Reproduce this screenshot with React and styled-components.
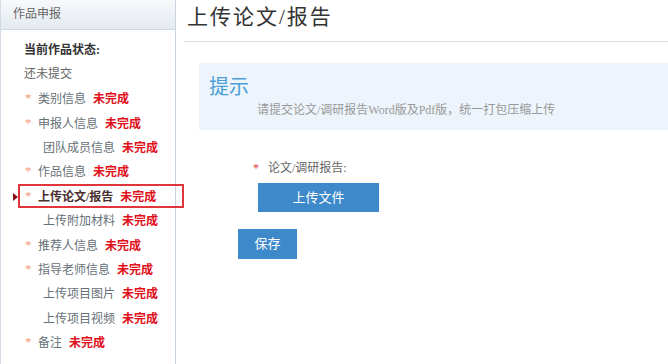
import React from 'react'
import styled, { createGlobalStyle } from 'styled-components'

const GlobalStyle = createGlobalStyle`
  html, body { margin: 0; padding: 0; background: #fff; }
  body {
    font-family: "Liberation Serif", "Noto Sans CJK SC", serif;
    width: 668px;
    height: 364px;
    overflow: hidden;
  }
`

const items = [
  { label: '类别信息', star: true },
  { label: '申报人信息', star: true },
  { label: '团队成员信息', sub: true },
  { label: '作品信息', star: true },
  { label: '上传论文/报告', star: true, active: true },
  { label: '上传附加材料', sub: true },
  { label: '推荐人信息', star: true },
  { label: '指导老师信息', star: true },
  { label: '上传项目图片', sub: true },
  { label: '上传项目视频', sub: true },
  { label: '备注', star: true },
]

function App() {
  return (
    <>
      <GlobalStyle />
      <Page>
        <Sidebar>
          <SideHead>作品申报</SideHead>
          <SideBody>
            <StatusTitle>当前作品状态:</StatusTitle>
            <StatusText>还未提交</StatusText>
            {items.map(it => (
              <Item key={it.label} $active={it.active} $sub={it.sub}>
                {it.active && <Arrow />}
                {it.star && <Star>*</Star>}
                <Label $active={it.active}>{it.label}</Label>
                <Todo>未完成</Todo>
              </Item>
            ))}
          </SideBody>
        </Sidebar>
        <Main>
          <Title>上传论文/报告</Title>
          <Tip>
            <TipTitle>提示</TipTitle>
            <TipText>请提交论文/调研报告Word版及Pdf版，统一打包压缩上传</TipText>
          </Tip>
          <Field>
            <FieldLabel><ReqStar>*</ReqStar>论文/调研报告:</FieldLabel>
            <Button $w={121} $h={29}>上传文件</Button>
          </Field>
          <SaveRow>
            <Button $w={59} $h={30}>保存</Button>
          </SaveRow>
        </Main>
      </Page>
    </>
  )
}

export default App

const Page = styled.div`
display: flex;
width: 668px;
height: 364px;
`
const Sidebar = styled.div`
width: 174px;
flex-shrink: 0;
border-left: 1px solid #d3dce7;
border-right: 1px solid #c9d4e1;
display: flex;
flex-direction: column;
`
const SideHead = styled.div`
height: 29px;
line-height: 29px;
padding-left: 12px;
font-size: 12px;
color: #666;
background: linear-gradient(#f7f9fb, #e4eaf1);
border-bottom: 1px solid #cfd8e3;
`
const SideBody = styled.div`
padding: 9px 0 0 17px;
display: flex;
flex-direction: column;
`
const StatusTitle = styled.div`
padding-left: 6px;
height: 23px;
line-height: 23px;
font-size: 12px;
font-weight: bold;
color: #333;
`
const StatusText = styled.div`
padding-left: 6px;
height: 24px;
line-height: 24px;
font-size: 12px;
color: #666;
`
const Item = styled.div`
position: relative;
box-sizing: border-box;
width: 166px;
height: 24.4px;
display: flex;
align-items: center;
font-size: 12px;
padding-left: ${p => (p.$sub ? '23px' : '5px')};
border: 2px solid ${p => (p.$active ? '#e0353b' : 'transparent')};
`
const Arrow = styled.span`
position: absolute;
left: -7px;
top: 7px;
width: 0;
height: 0;
border-top: 4px solid transparent;
border-bottom: 4px solid transparent;
border-left: 5px solid #8b0d14;
`
const Star = styled.span`
color: #ef9d78;
width: 13px;
font-size: 13px;
`
const Label = styled.span`
color: ${p => (p.$active ? '#4a2f2f' : '#667077')};
font-weight: ${p => (p.$active ? 'bold' : 'normal')};
margin-right: 7px;
`
const Todo = styled.span`
color: #e0111b;
font-weight: bold;
`
const Main = styled.div`
flex: 1;
min-width: 0;
padding-left: 8px;
display: flex;
flex-direction: column;
`
const Title = styled.div`
height: 41px;
line-height: 34px;
padding-left: 3px;
font-size: 21px;
letter-spacing: 2px;
color: #333;
border-bottom: 1px solid #d9dde2;
`
const Tip = styled.div`
margin: 21px 0 0 15px;
height: 67px;
box-sizing: border-box;
background: #edf4fb;
padding: 12px 0 0 10px;
`
const TipTitle = styled.div`
font-size: 20px;
line-height: 24px;
color: #4a9fd4;
`
const TipText = styled.div`
padding-left: 48px;
margin-top: 3px;
font-size: 12px;
line-height: 16px;
color: #999;
`
const Field = styled.div`
margin: 30px 0 0 69px;
display: flex;
flex-direction: column;
align-items: flex-start;
`
const FieldLabel = styled.div`
font-size: 12px;
line-height: 16px;
color: #666;
margin-bottom: 7px;
`
const ReqStar = styled.span`
color: #e0353b;
margin-right: 9px;
`
const Button = styled.div`
width: ${p => p.$w}px;
height: ${p => p.$h}px;
line-height: ${p => p.$h}px;
text-align: center;
background: #3e89c9;
color: #fff;
font-size: 13px;
margin-left: 5px;
`
const SaveRow = styled.div`
margin: 17px 0 0 49px;
`
